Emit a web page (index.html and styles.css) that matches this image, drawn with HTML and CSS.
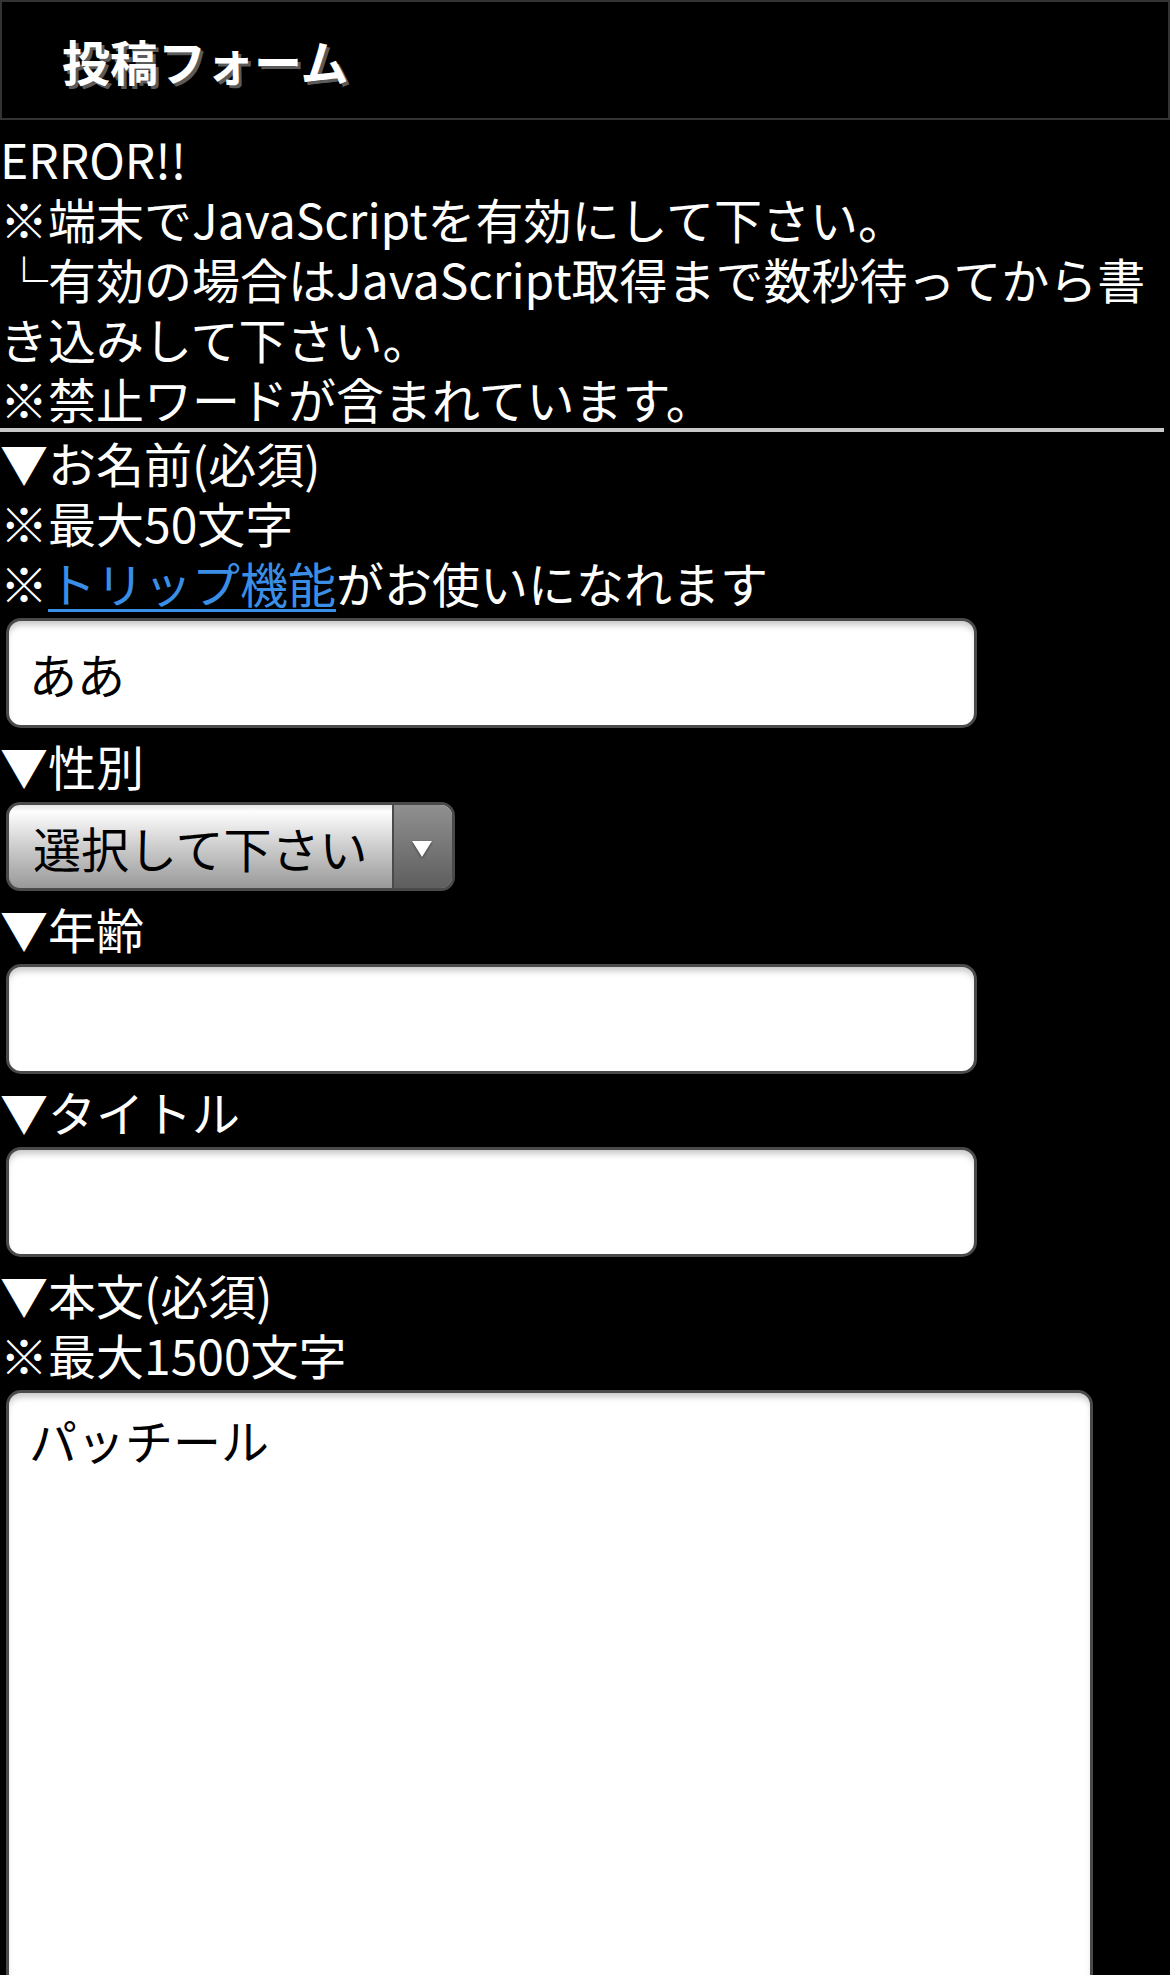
FILE: index.html
```html
<!DOCTYPE html>
<html lang="ja">
<head>
  <meta charset="UTF-8">
  <meta name="viewport" content="width=device-width, initial-scale=1.0">
  <title>投稿フォーム</title>
  <link rel="stylesheet" href="styles.css">
</head>
<body>

  <div class="header">
    <h1>投稿フォーム</h1>
  </div>

  <div class="error">
    ERROR!!<br>
    ※端末でJavaScriptを有効にして下さい。<br>
    └有効の場合はJavaScript取得まで数秒待ってから書き込みして下さい。<br>
    ※禁止ワードが含まれています。
  </div>

  <hr class="line">

  <form class="post-form" action="#" method="post">
    <div class="label">▼お名前(必須)</div>
    <div class="note">※最大50文字</div>
    <div class="note">※<a href="#">トリップ機能</a>がお使いになれます</div>
    <input type="text" name="name" class="text-input" value="ああ">

    <div class="label">▼性別</div>
    <div class="select-box">
      <select name="sex">
        <option value="">選択して下さい</option>
        <option value="1">男性</option>
        <option value="2">女性</option>
      </select>
    </div>

    <div class="label">▼年齢</div>
    <input type="text" name="age" class="text-input">

    <div class="label">▼タイトル</div>
    <input type="text" name="title" class="text-input">

    <div class="label">▼本文(必須)</div>
    <div class="note">※最大1500文字</div>
    <textarea name="body" class="text-area">パッチール</textarea>
  </form>

</body>
</html>
```

FILE: styles.css
```css
body {
  margin: 0;
  background-color: #000;
  color: #fff;
  font-family: "Noto Sans CJK JP", sans-serif;
  font-size: 48px;
  line-height: 60px;
}
.header {
  height: 116px;
  border: 2px solid #333;
  display: flex;
  align-items: center;
  padding-left: 60px;
  margin-bottom: 8px;
}
.header h1 {
  margin: 0;
  font-size: 48px;
  font-weight: bold;
  text-shadow: 3px 3px 0 #5a5a5a;
}
.error {
  margin: 0;
}
.line {
  height: 0;
  border: none;
  border-top: 4px solid #c8c8c8;
  margin: 0 6px 0 0;
}
.post-form {
  margin: 0;
}
a {
  color: #3a8ee6;
  text-decoration-thickness: 3px;
  text-underline-offset: 6px;
}
.text-input,
.text-area {
  display: block;
  box-sizing: border-box;
  margin: 6px 0 7px 6px;
  border: 3px solid #4a4a4a;
  border-radius: 15px;
  background-color: #fff;
  box-shadow: inset 0 6px 6px -2px rgba(0, 0, 0, 0.22);
  font-family: "Noto Sans CJK JP", sans-serif;
  font-size: 48px;
  color: #000;
  padding: 0 20px;
  outline: none;
}
.text-input {
  width: 971px;
  height: 110px;
}
.text-area {
  width: 1087px;
  height: 720px;
  padding-top: 16px;
  line-height: 60px;
  resize: none;
}
.select-box {
  position: relative;
  width: 449px;
  margin: 7px 0 7px 6px;
}
.select-box select {
  display: block;
  width: 100%;
  height: 89px;
  appearance: none;
  -webkit-appearance: none;
  border: 3px solid #4a4a4a;
  border-radius: 14px;
  background: linear-gradient(#e6e6e6 0, #fdfdfd 8%, #cdcdcd 50%, #999 100%);
  font-family: "Noto Sans CJK JP", sans-serif;
  font-size: 48px;
  color: #000;
  padding: 0 0 0 24px;
}
/* 右側の矢印ボタン部分 */
.select-box::after {
  content: "";
  position: absolute;
  top: 3px;
  right: 3px;
  bottom: 3px;
  width: 58px;
  border-left: 2px solid #4a4a4a;
  border-radius: 0 11px 11px 0;
  background: linear-gradient(#909090, #5e5e5e);
  pointer-events: none;
}
.select-box::before {
  content: "";
  position: absolute;
  top: 39px;
  right: 23px;
  width: 0;
  height: 0;
  border-left: 10px solid transparent;
  border-right: 10px solid transparent;
  border-top: 16px solid #fff;
  filter: drop-shadow(0 1px 1px rgba(0, 0, 0, 0.5));
  z-index: 1;
  pointer-events: none;
}
```
